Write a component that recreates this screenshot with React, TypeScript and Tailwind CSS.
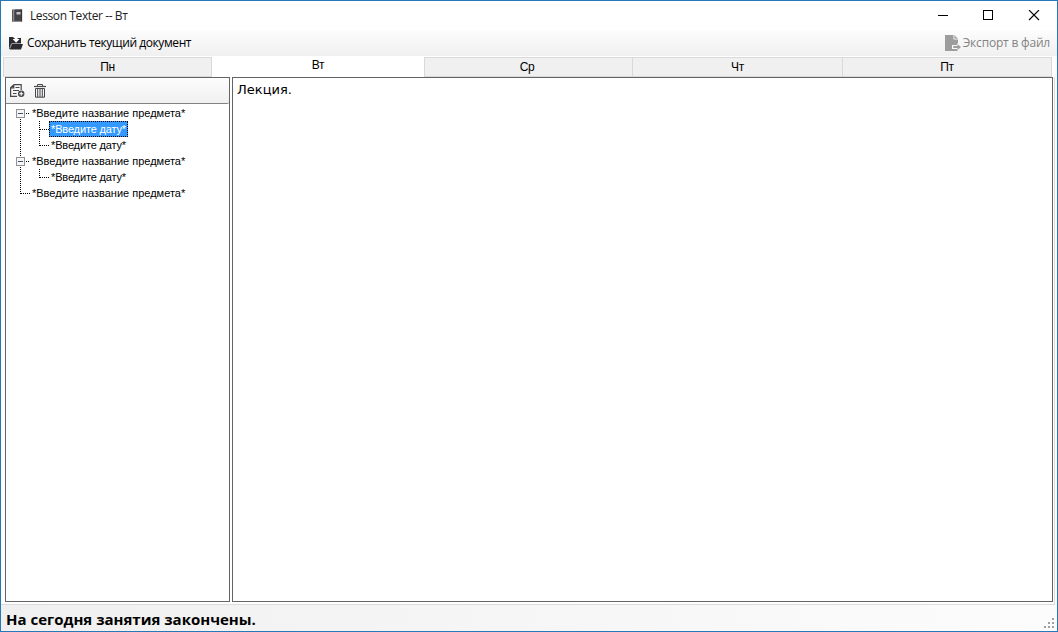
import React from "react";

const SUBJECT = "*Введите название предмета*";
const DATE = "*Введите дату*";

function BookIcon() {
  return (
    <svg width="12" height="14" viewBox="0 0 12 14" className="block">
      <path d="M1 .5h10v12H1z" fill="#55555a" />
      <path d="M4 .5h7v11H4z" fill="#434348" />
      <path d="M2.5 .5v12" stroke="#8b8b90" />
      <path d="M5.5 3h4v2.5h-4z" fill="#c4c4c8" />
      <path d="M1 12.5h10" stroke="#8d8d92" />
      <path d="M10.7 .5v12" stroke="#2d2d31" strokeWidth=".7" />
    </svg>
  );
}

function SaveIcon() {
  return (
    <svg width="14" height="14" viewBox="0 0 14 14" className="block">
      <path d="M0 1h4l1 1h7v6H3L1 13H0z" fill="#2b2b2f" />
      <path d="M5.6 0h3v3h2L7.1 6.7 3.6 3h2z" fill="#fff" />
      <path d="M.8 13.5 3 8h11l-2 5.5z" fill="#2b2b2f" />
      <path d="M.6 12.4 2.7 7.5H12" stroke="#c4c4c8" strokeWidth=".7" fill="none" />
    </svg>
  );
}

function ExportIcon() {
  return (
    <svg width="16" height="16" viewBox="0 0 16 16" className="block">
      <path d="M0 0h8.5v4.5H13V16H0z" fill="#9d9d9d" />
      <path d="M9.3 0 13 3.7H9.3z" fill="#a8a8a8" />
      <path d="M7 10h5V8l4 4-4 4v-2H7z" fill="#f7f7f7" />
      <path d="M8.3 11h4.2V9.2L16 12l-3.5 3V13H8.3z" fill="#9d9d9d" />
    </svg>
  );
}

function AddNoteIcon() {
  return (
    <svg width="15" height="14" viewBox="0 0 15 14" className="block" fill="none" stroke="#48484c">
      <path d="M3.8 .6h7.4v5.5M3.8 .6.6 3.8v8.6H7M3.8 .6v3.2H.6" strokeWidth="1.2" />
      <path d="M5.5 3.5h4M3 6.5h6M3 9.5h3.5" />
      <circle cx="11.2" cy="9.8" r="3.2" fill="#48484c" stroke="none" />
      <path d="M9.2 9.8h4M11.2 7.8v4" stroke="#fff" strokeWidth="1.1" />
    </svg>
  );
}

function TrashIcon() {
  return (
    <svg width="12" height="14" viewBox="0 0 12 14" className="block" fill="none" stroke="#48484c">
      <path d="M0 2.5h12" strokeWidth="1.2" />
      <path d="M3.5 2.5v-2h5v2M1.5 4.5h9v8.7h-9z" />
      <path d="M3.7 5v8M6 5v8M8.3 5v8" strokeWidth="1" />
    </svg>
  );
}

function WindowButtons() {
  return (
    <svg width="104" height="12" viewBox="0 0 104 12" className="block" fill="none" stroke="#000" shapeRendering="crispEdges">
      <path d="M0 5.5h10M45.5.5h9v9h-9z" />
      <path d="M91 0l10 10M101 0 91 10" shapeRendering="auto" strokeWidth="1.1" />
    </svg>
  );
}

function TreeLines() {
  return (
    <svg width="46" height="96" viewBox="0 0 46 96" className="absolute left-0 top-px" fill="none" shapeRendering="crispEdges">
      <g stroke="#000" strokeDasharray="1 1">
        <path d="M14.5 14v38M14.5 62v27M14.5 88.5H24M20 8.5h3M20 56.5h3" />
        <path d="M33.5 16v25M33.5 24.5H43M33.5 40.5H43M33.5 64v9M33.5 72.5H43" />
      </g>
      <g stroke="#919191" fill="#f5f5f5">
        <path d="M10.5 4.5h8v8h-8zM10.5 52.5h8v8h-8z" />
      </g>
      <path d="M12 8.5h5M12 56.5h5" stroke="#44546c" />
    </svg>
  );
}

function Tree() {
  const rows = [
    { text: SUBJECT, child: false },
    { text: DATE, child: true, selected: true },
    { text: DATE, child: true },
    { text: SUBJECT, child: false },
    { text: DATE, child: true },
    { text: SUBJECT, child: false },
  ];
  return (
    <div className="relative flex flex-col pt-px text-[11px]">
      <TreeLines />
      {rows.map((row, i) => (
        <div key={i} className={row.child ? "flex h-4 pl-[43px] tracking-[-0.15px]" : "flex h-4 pl-6"}>
          <span
            className={
              row.selected
                ? "h-4 whitespace-nowrap bg-[#3399ff] px-0.5 leading-4 text-white outline-1 -outline-offset-1 outline-dotted outline-black"
                : "h-4 whitespace-nowrap px-0.5 leading-4"
            }
          >
            {row.text}
          </span>
        </div>
      ))}
    </div>
  );
}

function Tab({ label, className }: { label: string; className: string }) {
  return <div className={`flex justify-center text-xs tracking-[-0.3px] ${className}`}>{label}</div>;
}

const idle = "h-5 border border-[#d9d9d9] bg-[#f0f0f0] leading-[19px]";

export default function App() {
  return (
    <div className="flex h-[632px] w-[1058px] flex-col overflow-hidden border border-[#2878b8] bg-white font-['Liberation_Sans',sans-serif] text-black">
      <header className="flex h-[29px] shrink-0 items-center pl-[10px] pr-[15px]">
        <BookIcon />
        <span className="ml-[7px] grow font-['Open_Sans',sans-serif] text-xs tracking-[-0.4px] text-[#222]">Lesson Texter -- Вт</span>
        <WindowButtons />
      </header>
      <div className="flex h-[26px] shrink-0 items-center bg-gradient-to-b from-[#fdfdfd] to-[#f0f0f0] pl-2 pr-[7px] font-['Open_Sans',sans-serif] text-xs">
        <SaveIcon />
        <span className="ml-1 grow tracking-[-0.42px]">Сохранить текущий документ</span>
        <ExportIcon />
        <span className="ml-0.5 tracking-[-0.2px] text-[#838383]">Экспорт в файл</span>
      </div>
      <nav className="flex h-[21px] shrink-0 items-end pl-0.5">
        <Tab label="Пн" className={`w-[209px] ${idle}`} />
        <Tab label="Вт" className="h-[21px] w-[212px] bg-white leading-[18px]" />
        <Tab label="Ср" className={`w-[209px] pr-[3px] ${idle}`} />
        <Tab label="Чт" className={`-ml-px w-[211px] ${idle}`} />
        <Tab label="Пт" className={`-ml-px w-[210px] ${idle}`} />
      </nav>
      <main className="mr-[2px] flex h-[528px] shrink-0 gap-0.5 border-b border-r border-[#dcdcdc] pb-0.5 pl-1">
        <aside className="flex w-[225px] flex-col border border-[#646464]">
          <div className="flex h-[26px] shrink-0 items-center gap-[9px] rounded-r-[2px] border-b border-[#828282] bg-gradient-to-b from-[#fdfdfd] to-[#f0f0f0] pl-1">
            <AddNoteIcon />
            <TrashIcon />
          </div>
          <Tree />
        </aside>
        <section className="w-[821px] border border-[#646464] pl-1 pt-0.5 font-['DejaVu_Sans',sans-serif] text-[13px] leading-5">
          Лекция.
        </section>
      </main>
      <footer className="flex grow items-center justify-between bg-gradient-to-r from-[#f0f0f0] to-[#fcfcfc] pl-[5px] pr-0.5 pt-0.5">
        <span className="font-['Open_Sans',sans-serif] text-[15px] font-bold leading-5">На сегодня занятия закончены.</span>
        <svg width="11" height="11" viewBox="0 0 11 11" className="mt-2 block" fill="#a0a0a0">
          <path d="M8 0h2v2H8zM4 4h2v2H4zM8 4h2v2H8zM0 8h2v2H0zM4 8h2v2H4zM8 8h2v2H8z" />
        </svg>
      </footer>
    </div>
  );
}
